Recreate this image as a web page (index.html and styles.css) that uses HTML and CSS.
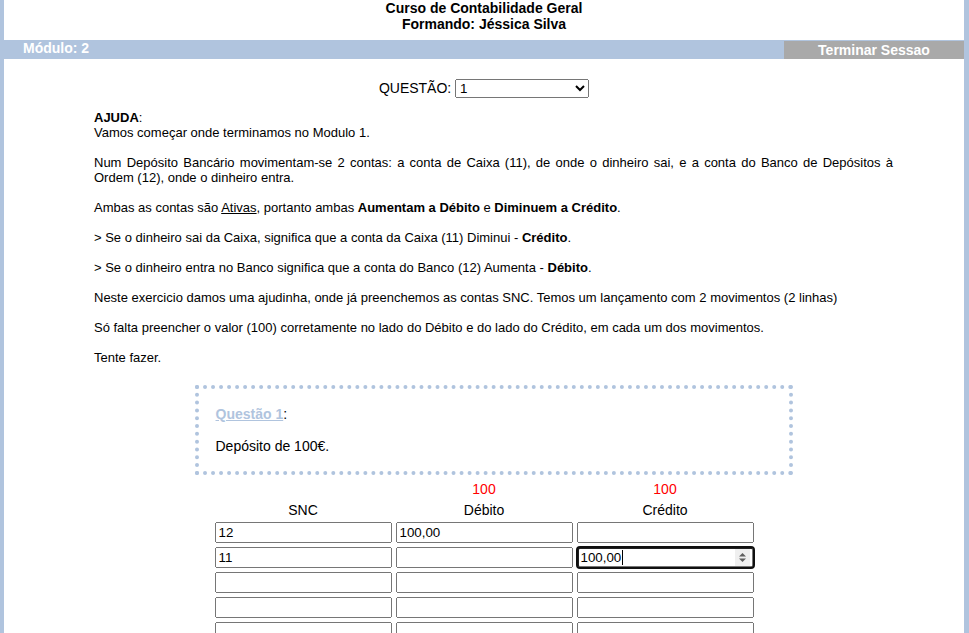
FILE: index.html
```html
<!DOCTYPE html>
<html lang="pt">
<head>
    <meta charset="UTF-8">
    <meta name="viewport" content="width=device-width, initial-scale=1.0">
    <title>Curso de Contabilidade Geral</title>
    <link rel="stylesheet" href="styles.css">
</head>
<body>

    <div class="page">
        <div class="titulo">
            Curso de Contabilidade Geral<br>
            Formando: Jéssica Silva
        </div>

        <div class="barra">
            <span class="modulo">Módulo: 2</span>
            <span class="sair">Terminar Sessao</span>
        </div>

        <div class="questao-select">
            QUESTÃO:
            <select>
                <option>1</option>
                <option>2</option>
                <option>3</option>
            </select>
        </div>

        <div class="ajuda">
            <b>AJUDA</b>:<br>
            Vamos começar onde terminamos no Modulo 1.<br><br>
            Num Depósito Bancário movimentam-se 2 contas: a conta de Caixa (11), de onde o dinheiro sai, e a conta do Banco de Depósitos à Ordem (12), onde o dinheiro entra.<br><br>
            Ambas as contas são <u>Ativas</u>, portanto ambas <b>Aumentam a Débito</b> e <b>Diminuem a Crédito</b>.<br><br>
            &gt; Se o dinheiro sai da Caixa, significa que a conta da Caixa (11) Diminui - <b>Crédito</b>.<br><br>
            &gt; Se o dinheiro entra no Banco significa que a conta do Banco (12) Aumenta - <b>Débito</b>.<br><br>
            Neste exercicio damos uma ajudinha, onde já preenchemos as contas SNC. Temos um lançamento com 2 movimentos (2 linhas)<br><br>
            Só falta preencher o valor (100) corretamente no lado do Débito e do lado do Crédito, em cada um dos movimentos.<br><br>
            Tente fazer.

            <!-- Enunciado da questão -->
            <div class="enunciado">
                <p><a class="q-link">Questão 1</a>:</p>
                <p>Depósito de 100€.</p>
            </div>
        </div>

        <div class="lancamento">
            <span></span>
            <span class="total">100</span>
            <span class="total">100</span>

            <span class="cab">SNC</span>
            <span class="cab">Débito</span>
            <span class="cab">Crédito</span>

            <input type="text" value="12">
            <input type="text" value="100,00">
            <input type="text">

            <input type="text" value="11">
            <input type="text">
            <div class="campo-ativo">
                <input type="text" class="ativo" value="100,00">
                <span class="cursor"></span>
                <svg class="spinner" width="15" height="17" viewBox="0 0 15 17">
                    <rect width="15" height="17" fill="#efefef"/>
                    <path d="M4 7.5 L7.5 4 L11 7.5 Z" fill="#5f5f5f"/>
                    <path d="M4 9.5 L7.5 13 L11 9.5 Z" fill="#5f5f5f"/>
                </svg>
            </div>

            <input type="text">
            <input type="text">
            <input type="text">

            <input type="text">
            <input type="text">
            <input type="text">

            <input type="text">
            <input type="text">
            <input type="text">
        </div>
    </div>

</body>
</html>
```

FILE: styles.css
```css
body {
    margin: 0;
    font-family: Arial, "Liberation Sans", sans-serif;
    color: #000;
    background: #fff;
}

.page {
    min-height: 100vh;
    border-left: 4px solid #b0c4de;
    border-right: 5px solid #b0c4de;
}

.titulo {
    text-align: center;
    font-size: 14px;
    font-weight: bold;
    line-height: 16px;
    margin-bottom: 8px;
}

.barra {
    display: flex;
    justify-content: space-between;
    background-color: #b0c4de;
    height: 19px;
    margin-left: -4px;
    color: #fff;
    font-size: 14px;
    font-weight: bold;
}

.modulo {
    padding-left: 23px;
    line-height: 16px;
}

.sair {
    width: 180px;
    margin-top: 1px;
    background-color: #a9a9a9;
    text-align: center;
    line-height: 18px;
}

.questao-select {
    text-align: center;
    font-size: 14px;
    margin-top: 20px;
    height: 31px;
}

.questao-select select {
    width: 134px;
    height: 19px;
    font-family: Arial, "Liberation Sans", sans-serif;
    font-size: 13.33px;
}

.ajuda {
    width: 799px;
    margin-left: 90px;
    font-size: 13px;
    line-height: 15px;
    text-align: justify;
}

.enunciado {
    width: 562px;
    margin: 20px auto 0;
    padding: 1px 11px 1px 17px;
    border: 4px dotted #b0c4de;
    font-size: 14px;
    line-height: 16px;
    text-align: left;
}

.enunciado p {
    margin: 16px 0;
}

.q-link {
    color: #b0c4de;
    font-weight: bold;
    text-decoration: underline;
}

.lancamento {
    display: grid;
    grid-template-columns: repeat(3, 177px);
    column-gap: 4px;
    row-gap: 4px;
    justify-content: center;
    margin-top: 6px;
    font-size: 14px;
    line-height: 16px;
    text-align: center;
}

.total {
    color: #ff0000;
    margin-bottom: 1px;
}

.lancamento input {
    box-sizing: border-box;
    width: 177px;
    height: 21px;
    margin: 0;
    font-family: Arial, "Liberation Sans", sans-serif;
    font-size: 13.33px;
}

.campo-ativo {
    position: relative;
}

.lancamento input.ativo {
    outline: 2px solid #101010;
    outline-offset: -1px;
    border-radius: 3px;
}

.cursor {
    position: absolute;
    left: 45px;
    top: 3px;
    width: 1px;
    height: 15px;
    background: #000;
}

.spinner {
    position: absolute;
    right: 4px;
    top: 2px;
}
```
